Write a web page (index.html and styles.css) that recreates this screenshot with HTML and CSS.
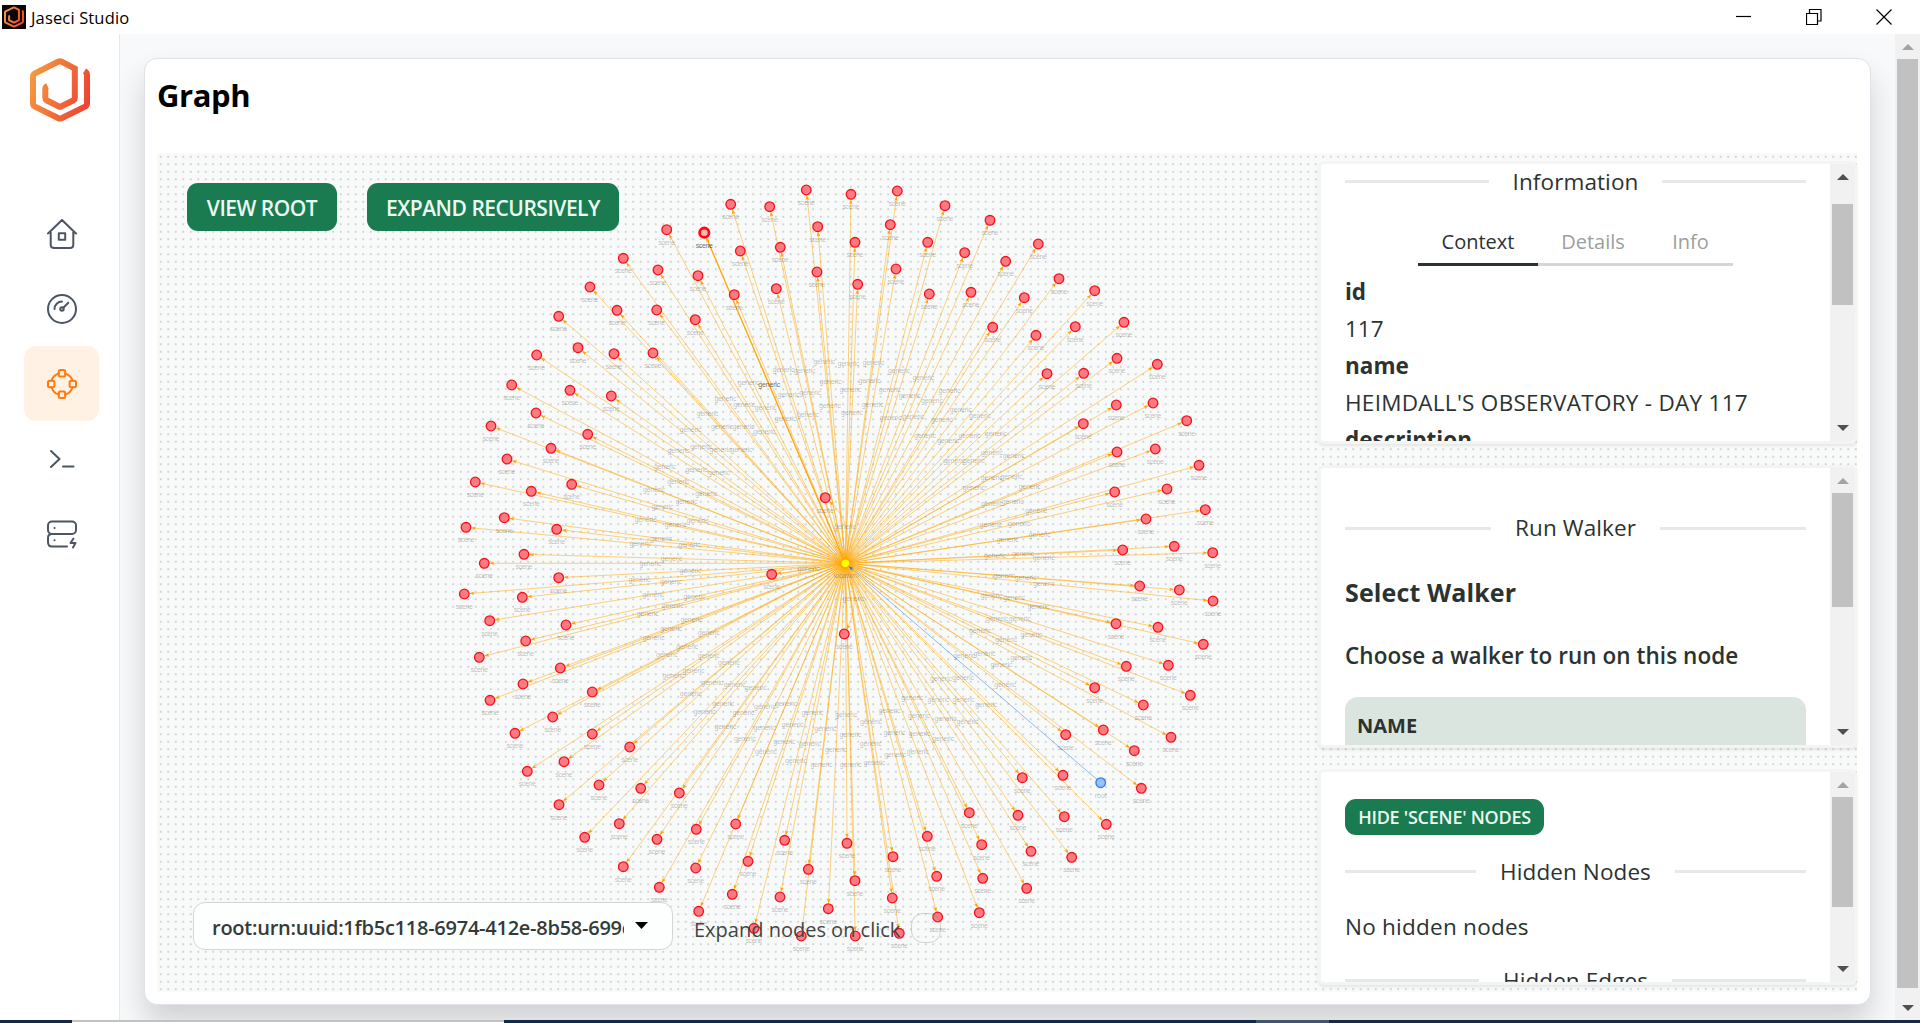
FILE: index.html
```html
<!DOCTYPE html>
<html lang="en">
<head>
<meta charset="utf-8">
<title>Jaseci Studio</title>
<link rel="stylesheet" href="styles.css">
</head>
<body>
<svg class="defs" width="0" height="0" aria-hidden="true">
  <defs>
    <linearGradient id="flame" gradientUnits="userSpaceOnUse" x1="0" y1="20" x2="60" y2="40">
      <stop offset="0" stop-color="#f59a40"/><stop offset="1" stop-color="#ee4433"/>
    </linearGradient>
    <symbol id="logo" viewBox="0 0 60 64">
      <path d="M54.500 13 Q57 14.500 57 17 V45.500 Q57 47.500 55 48.600 L32 60 Q30 61 28 60 L5 48.600 Q3 47.500 3 45.500 V18.500 Q3 16.500 5 15.300 L28 3.800 Q30 2.800 32 3.800 L44.800 10.600 V40 Q44.800 41.500 43.500 42.300 L31 48.500 Q30 49 29 48.500 L16.500 42.300 Q15.300 41.500 15.300 40 V31 Q15.300 29 17.500 28" fill="none" stroke="url(#flame)" stroke-width="6"/>
    </symbol>
  </defs>
</svg>

<header class="titlebar">
  <span class="app-icon"><svg width="20" height="22"><use href="#logo"/></svg></span>
  <span class="app-name">Jaseci Studio</span>
  <div class="window-controls">
    <svg width="16" height="16"><path d="M0 7.500H15"/></svg>
    <svg width="16" height="16"><path d="M.5 4.500h11v11H.5zM3.500 4.500v-4h11.500v11.500h-3.500"/></svg>
    <svg width="16" height="16"><path d="M.5 .5l15 15M15.500 .5l-15 15"/></svg>
  </div>
</header>

<div class="shell">
  <nav class="sidebar">
    <svg class="logo" width="60" height="64"><use href="#logo"/></svg>
    <a class="nav-item"><svg width="30" height="30" viewBox="0 0 30 30"><path d="M1 14.500L15 1l14 13.500M3.700 13v12.500q0 3.500 3.500 3.500h15.600q3.500 0 3.500-3.500V13M11.800 14.200h6.400v6.600h-6.400z"/></svg></a>
    <a class="nav-item"><svg width="30" height="30" viewBox="0 0 30 30"><circle cx="15" cy="15" r="14"/><circle cx="15" cy="15" r="1.700"/><path d="M16.300 13.700l5-5M7.500 15a7.500 7.500 0 0 1 7.500-7.500"/></svg></a>
    <a class="nav-item active"><svg width="30" height="30" viewBox="0 0 30 30"><rect x="11.800" y="1" width="6.400" height="6.400" rx="1.500"/><rect x="11.800" y="22.600" width="6.400" height="6.400" rx="1.500"/><rect x="1" y="11.800" width="6.400" height="6.400" rx="1.500"/><rect x="22.600" y="11.800" width="6.400" height="6.400" rx="1.500"/><path d="M18.200 4.500a10.800 10.800 0 0 1 7.300 7.300M25.500 18.200a10.800 10.800 0 0 1-7.300 7.300M11.800 25.500a10.800 10.800 0 0 1-7.300-7.300M4.500 11.800a10.800 10.800 0 0 1 7.300-7.300"/></svg></a>
    <a class="nav-item"><svg width="30" height="30" viewBox="0 0 30 30"><path d="M4 7l8.500 8L4 23M16 22.500h10.500"/></svg></a>
    <a class="nav-item"><svg width="30" height="30" viewBox="0 0 30 30"><rect x="1" y="2.500" width="28" height="12.500" rx="4"/><path d="M5 15q-4 0-4 4v4q0 4.500 4 4.500h15M7.500 9h.1M7.500 21.200h.1M26.500 19.500l-3 4.500h5l-2.500 4.500"/></svg></a>
  </nav>

  <main class="content">
    <section class="card">
      <h1>Graph</h1>
      <div class="workspace">
        <svg class="graph" id="graph" width="1163" height="839"></svg>
        <div class="stage">
          <div class="toolbar">
            <button class="btn view">VIEW ROOT</button>
            <button class="btn expand">EXPAND RECURSIVELY</button>
          </div>
          <div class="footer">
            <div class="select"><span class="value">root:urn:uuid:1fb5c118-6974-412e-8b58-699c</span><svg width="14" height="8"><path d="M0 0h13L6.500 7z"/></svg></div>
            <label class="toggle"><span>Expand nodes on click</span><i></i></label>
          </div>
        </div>

        <aside class="panels">
          <div class="panel info">
            <div class="panel-body">
              <div class="divider"><span>Information</span></div>
              <div class="tabs"><span class="tab on">Context</span><span class="tab details">Details</span><span class="tab last">Info</span></div>
              <dl>
                <dt>id</dt><dd>117</dd>
                <dt>name</dt><dd class="scene-name">HEIMDALL'S OBSERVATORY - DAY 117</dd>
                <dt>description</dt>
              </dl>
            </div>
            <div class="scrollbar"><i class="up dark"></i><div class="track"><div class="thumb"></div></div><i class="down"></i></div>
          </div>

          <div class="panel walker">
            <div class="panel-body">
              <div class="divider"><span>Run Walker</span></div>
              <h2>Select Walker</h2>
              <p class="lead">Choose a walker to run on this node</p>
              <div class="thead"><span>NAME</span></div>
            </div>
            <div class="scrollbar"><i class="up"></i><div class="track"><div class="thumb"></div></div><i class="down"></i></div>
          </div>

          <div class="panel hidden">
            <div class="panel-body">
              <button class="btn small">HIDE 'SCENE' NODES</button>
              <div class="divider"><span>Hidden Nodes</span></div>
              <p class="empty">No hidden nodes</p>
              <div class="divider"><span>Hidden Edges</span></div>
            </div>
            <div class="scrollbar"><i class="up"></i><div class="track"><div class="thumb"></div></div><i class="down"></i></div>
          </div>
        </aside>
      </div>
    </section>
  </main>
  <div class="scrollbar page"><i class="up"></i><div class="track"><div class="thumb"></div></div><i class="down"></i></div>
</div>
<footer class="taskbar"><span class="search"></span></footer>
<script src="graph.js"></script>
</body>
</html>
```
FILE: styles.css
```css
* { box-sizing: border-box; }
html, body { height: 100%; }
body {
  margin: 0;
  overflow: hidden;
  display: flex;
  flex-direction: column;
  background: #fff;
  color: #2b3331;
  font-family: "Open Sans", "Noto Sans", sans-serif;
  font-size: 22.5px;
}
h1, h2, p, dl, dd { margin: 0; }
span, dt, dd, h1, h2, p { white-space: nowrap; }
.defs { position: absolute; }

/* window title bar */
.titlebar {
  flex: none;
  height: 34px;
  display: flex;
  align-items: center;
  padding: 0 28px 0 2px;
  color: #000;
  font-size: 16.5px;
}
.app-icon { width: 24px; height: 24px; background: #0b0604; display: grid; place-items: center; margin-right: 5px; }
.app-name { letter-spacing: 0.15px; }
.window-controls { margin-left: auto; display: flex; gap: 54px; }
.window-controls svg { fill: none; stroke: #000; stroke-width: 1.2; }

.shell { flex: 1; min-height: 0; display: flex; }

/* navigation */
.sidebar {
  width: 120px;
  flex: none;
  border-right: 1px solid #e5e7eb;
  padding: 24px 0 0 24px;
}
.logo { display: block; margin: 0 0 74px 6px; }
.nav-item {
  display: flex;
  align-items: center;
  justify-content: center;
  width: 75px;
  height: 75px;
  padding-left: 1px;
  border-radius: 12px;
}
.nav-item svg { fill: none; stroke: #4b5563; stroke-width: 2; stroke-linecap: round; stroke-linejoin: round; }
.nav-item.active { background: #fff2e4; }
.nav-item.active svg { stroke: #ff7a0f; }

.content { flex: 1; background: #f8f9fb; padding: 24px 24px 16px 24px; overflow: hidden; }
.card {
  height: 947px;
  border: 1px solid #dfe2e6;
  border-radius: 13px;
  background: #fff;
  padding: 0 13px 12px 12px;
  box-shadow: 0 18px 30px rgba(0,0,0,.16);
  display: flex;
  flex-direction: column;
}
h1 { height: 94px; padding-top: 14px; line-height: 44px; font-size: 31px; font-weight: 700; color: #000; letter-spacing: -0.4px; }

/* graph workspace */
.workspace {
  position: relative;
  flex: 1;
  min-height: 0;
  display: flex;
  background: #f8faf9 radial-gradient(circle at center, #d0d3d2 0, #d0d3d2 .7px, transparent 1.3px) 0 0 / 7.5px 7.5px;
}
.graph { position: absolute; left: 0; top: 0; font-family: "Liberation Sans", Arial, sans-serif; font-size: 7px; }
.graph text { text-anchor: middle; fill: #000; fill-opacity: .27; }
.graph text.strong { fill-opacity: .6; }
.stage { position: relative; flex: 1; display: flex; flex-direction: column; justify-content: space-between; padding: 30px 0 42px 30px; }
.toolbar { display: flex; gap: 30px; }
.btn {
  border: 0;
  padding: 0;
  height: 48px;
  border-radius: 11px;
  background: #1a7a50;
  color: #eafaf2;
  font: 600 21px/50px "Open Sans", sans-serif;
  letter-spacing: -0.5px;
  white-space: nowrap;
}
.view { width: 150px; }
.expand { width: 252px; }
.footer { display: flex; align-items: center; gap: 21px; padding-left: 6px; }
.select {
  width: 480px;
  height: 48px;
  display: flex;
  align-items: center;
  gap: 11px;
  padding-left: 18px;
  border: 1px solid #d3d6d5;
  border-radius: 12px;
  background: #fdfefe;
}
.value { width: 412px; padding-top: 3px; overflow: hidden; font-size: 20px; font-weight: 600; letter-spacing: -0.25px; color: #333b39; }
.toggle { display: flex; align-items: center; gap: 11px; font-size: 20px; color: #444; }
.toggle span { padding-top: 7px; }
.toggle i { width: 30px; height: 30px; margin-top: 3px; border: 1px solid rgba(90,95,93,.25); border-radius: 12px; }

/* side panels */
.panels { position: relative; width: 539px; flex: none; padding-top: 8px; display: flex; flex-direction: column; gap: 21px; }
.panel {
  display: flex;
  overflow: hidden;
  border: 3px solid #f3f4f4;
  border-right-width: 2px;
  border-radius: 6px;
  background: #fff;
  box-shadow: 0 2px 3px rgba(0,0,0,.08);
}
.info { height: 283px; }
.walker { height: 283px; }
.hidden { height: 216px; }
.panel-body { flex: 1; min-width: 0; padding: 0 24px; overflow: hidden; }
.divider { display: flex; align-items: center; gap: 24px; height: 36px; letter-spacing: 0.1px; }
.divider::before, .divider::after { content: ""; flex: 1; height: 3px; background: #e8e8e8; }
.divider span { line-height: 34px; }
.info .divider { height: 35px; }
.tabs { display: flex; justify-content: center; margin-top: 27px; font-size: 20px; }
.tab { width: 120px; height: 40px; line-height: 31px; text-align: center; border-bottom: 3px solid #d5d7d6; color: #9b9f9e; }
.tab.on { border-color: #2b3331; color: #2b3331; }
.tab.details { width: 110px; }
.tab.last { width: 85px; }
dl { padding-top: 7px; }
dt, dd { height: 37px; line-height: 37px; }
dt { font-weight: 700; }
.scene-name { letter-spacing: 0.28px; }

.walker .divider { margin-top: 42px; }
h2 { margin-top: 28px; line-height: 37px; font-size: 25px; font-weight: 700; letter-spacing: 0.12px; }
.lead { margin-top: 26px; line-height: 37px; font-weight: 600; letter-spacing: 0.05px; }
.thead { margin-top: 23px; height: 60px; padding: 10px 12px; border-radius: 13px 13px 0 0; background: #dae5df; font-size: 20px; line-height: 38px; font-weight: 700; }

.small { display: block; width: 199px; height: 36px; margin-top: 27px; font-size: 18px; line-height: 37px; letter-spacing: -0.25px; }
.hidden .divider { margin-top: 18px; }
.hidden .divider span { line-height: 36px; padding-top: 2px; }
.empty { margin-top: 19px; line-height: 37px; letter-spacing: 0.25px; }
.hidden .empty + .divider { margin-top: 17px; }

/* scrollbars */
.scrollbar { width: 25px; flex: none; display: flex; flex-direction: column; align-items: center; background: #f1f1f1; }
.scrollbar i { height: 26px; width: 12px; display: flex; align-items: center; }
.scrollbar i::before { content: ""; border: 6px solid transparent; border-top-width: 0; border-bottom: 6px solid #a3a3a3; }
.scrollbar .dark::before { border-bottom-color: #505050; }
.scrollbar .down::before { border: 6px solid transparent; border-bottom-width: 0; border-top: 6px solid #505050; }
.track { flex: 1; width: 21px; }
.thumb { background: #c1c1c1; height: 100%; }
.info .track { padding-top: 14px; }
.info .thumb { height: 101px; }
.walker .up, .hidden .up { height: 25px; }
.walker .thumb { height: 114px; }
.hidden .thumb { height: 110px; }
.page .up { height: 25px; }
.page .down { height: 32px; padding-bottom: 0; }
.page .down::before { margin-bottom: -6px; transform: translateY(1px); }

.taskbar { flex: none; height: 3px; display: flex; background: linear-gradient(90deg, #16263f 0 504px, #13294b 504px 1256px, #44546e 1256px 1329px, #1a2747 1329px); }
.search { margin-left: 72px; width: 432px; background: #fff; border-top: 2px solid #c1c3c1; }
```
FILE: graph.js
```js
// Node positions by quadrant, in thirds of a pixel from each quadrant's origin.
const quadrants = [
  { ox: 440, oy: 160, pts: '1099,90 872,133 989,140 680,209 1133,200 901,273 1021,262 550,295 654,330 774,347 883,404 1131,336 1009,386 450,381 531,451 650,450 766,479 356,469 290,585 414,563 522,581 639,579 215,675 390,691 514,708 288,759 153,798 443,823 333,865 201,897 106,966 274,994 395,973 193,1073 78,1102 350,1108 252,1183' },
  { ox: 840, oy: 160, pts: '33,103 172,93 315,137 450,181 151,194 45,247 263,247 374,278 497,304 595,252 657,356 168,327 53,373 268,402 393,397 553,413 764,392 458,502 588,526 706,500 852,487 831,595 952,613 621,641 731,640 829,735 939,729 730,791 1040,782 831,876 946,867 1077,916 824,996 981,987 1096,1049 918,1077 848,1170 1003,1159 1118,1178' },
  { ox: 440, oy: 550, pts: '133,40 356,83 73,132 247,142 149,212 378,225 257,273 118,322 361,354 249,402 150,451 457,426 338,501 225,550 457,552 569,591 372,635 262,664 477,705 357,764 602,715 718,729 538,821 434,862 651,868 769,838 887,822 550,950 767,954 924,934 1034,871 658,1012 877,1033 1020,1041 1105,958 1165,1076 776,1084 942,1135 1084,1158' },
  { ox: 840, oy: 550, pts: '21,880 45,992 46,1158 159,920 157,1044 178,1150 262,859 290,979 293,1101 388,788 425,884 428,985 418,1088 534,796 573,904 560,1015 547,683 669,676 673,800 695,922 799,823 904,715 677,554 790,540 883,602 764,413 910,465 993,562 859,349 985,346 1051,436 828,221 954,232 1090,283 899,108 1018,120 1119,153' }
];
const hub = [845.3, 563.3];
const nodes = quadrants.flatMap(q => q.pts.split(' ').map(p => {
  const [x, y] = p.split(',').map(Number);
  return { x: q.ox + x / 3, y: q.oy + y / 3 };
}));
// Close neighbours of the hub have curved edges.
nodes.push({ x: 825.3, y: 497.7, mid: [845, 527] }, { x: 771.7, y: 574.3, mid: [808.5, 569] }, { x: 844.3, y: 634, mid: [853.5, 599] });
nodes.push({ x: 704.3, y: 232.7, selected: true });

const widths = { generic: 22, scene: 17, root: 12, location: 23 };
const f = n => n.toFixed(1);
let edges = '', circles = '', labels = '';
const label = (x, y, t, c) => `<text x="${f(x)}" y="${f(y + 2.3)}"${c ? ` class="${c}"` : ''} textLength="${widths[t]}">${t}</text>`;
const arrow = (x, y, angle, gap, color) => {
  const p = (d, s) => f(x - Math.cos(angle) * d - Math.sin(angle) * s) + ',' + f(y - Math.sin(angle) * d + Math.cos(angle) * s);
  return `<polygon points="${p(gap, 0)} ${p(gap + 5, 1.8)} ${p(gap + 4, 0)} ${p(gap + 5, -1.8)}" fill="${color}"/>`;
};
for (const n of nodes) {
  const m = n.mid || [hub[0] + (n.x - hub[0]) * 0.54, hub[1] + (n.y - hub[1]) * 0.54];
  const c = n.mid ? [2 * m[0] - (hub[0] + n.x) / 2, 2 * m[1] - (hub[1] + n.y) / 2] : m;
  const a = Math.atan2(n.y - c[1], n.x - c[0]);
  edges += `<path d="M${hub}Q${f(c[0])},${f(c[1])} ${f(n.x - Math.cos(a) * 7)},${f(n.y - Math.sin(a) * 7)}" fill="none" stroke="#ffa500" stroke-opacity="${n.selected ? 1 : 0.5}" stroke-width="${n.selected ? 1.3 : 1}"/>`;
  edges += arrow(n.x, n.y, a, 5, '#ffa500');
  circles += n.selected
    ? `<circle cx="${n.x}" cy="${n.y}" r="4.7" fill="#ffb3b3" stroke="#ff0a14" stroke-width="2.8"/>`
    : `<circle cx="${f(n.x)}" cy="${f(n.y)}" r="4.8" fill="#fc7a80" stroke="#f5101c" stroke-width="1.3"/>`;
  labels += label(n.x, n.y + 12.7, 'scene', n.selected && 'strong') + label(m[0], m[1], 'generic', n.selected && 'strong');
}
const root = [1100.7, 782.7];
const ra = Math.atan2(hub[1] - root[1], hub[0] - root[0]);
edges += `<path d="M${root}L${hub}" stroke="#2b7ce9" stroke-opacity=".5"/>` + arrow(hub[0], hub[1], ra, 4.5, '#2b7ce9');
circles += `<circle cx="${root[0]}" cy="${root[1]}" r="4.8" fill="#97c2fc" stroke="#2b7ce9" stroke-width="1.3"/>`;
circles += `<circle cx="${hub[0]}" cy="${hub[1]}" r="4.3" fill="#ff0" stroke="#ffa500" stroke-width="1"/>`;
labels += label(root[0], root[1] + 12.7, 'root') + label(hub[0], hub[1] + 12.7, 'location');
document.getElementById('graph').innerHTML = `<g transform="translate(-157 -153)">${edges}${labels}${circles}</g>`;
```
